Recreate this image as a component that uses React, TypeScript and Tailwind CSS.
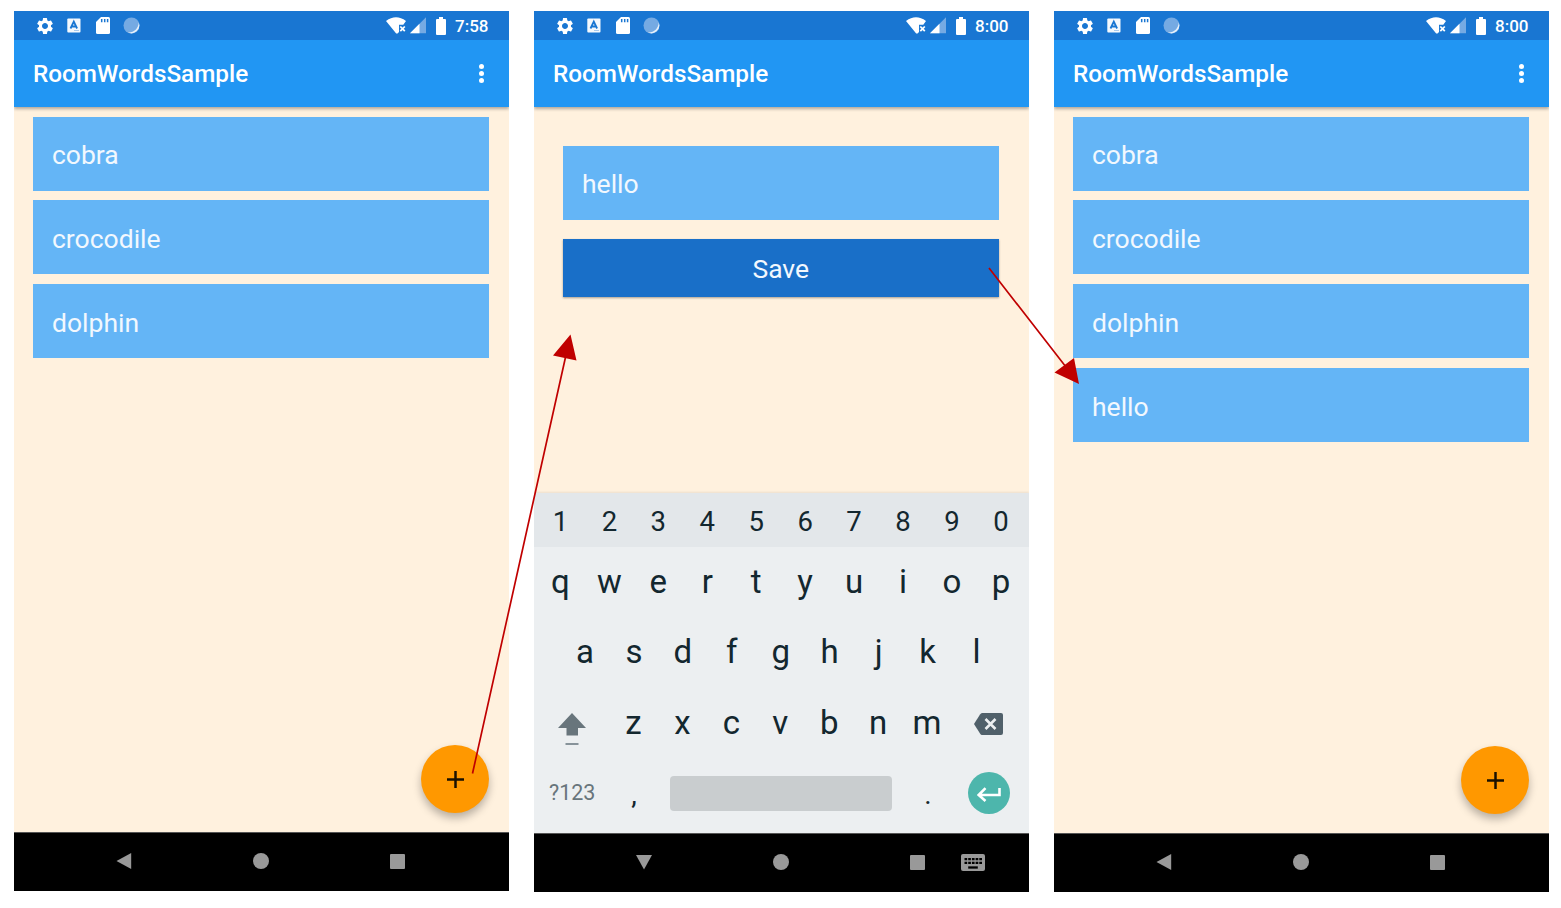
import type { ReactNode } from 'react';
import { MdSettings } from 'react-icons/md';

function StatusBar({ time }: { time: string }) {
  return (
    <div className="flex h-[29px] shrink-0 items-center bg-[#1976d2] pl-[21px] pr-[21px] text-white">
      <MdSettings className="h-5 w-5" />
      <svg className="ml-3 h-[15px] w-[14px]" viewBox="0 0 14 15">
        <rect x="0.3" y="0.5" width="13.2" height="14" rx="1" fill="#f4f8fd" />
        <path d="M3.500 10.500 6.800 3.500l3.300 7M4.600 8.500h4.400" fill="none" stroke="#1976d2" strokeWidth="1.800" />
        <path d="M7 12.500h5" stroke="#a9c9ec" />
      </svg>
      <svg className="ml-[15px] h-[17px] w-[14px]" viewBox="0 0 14 17">
        <path d="M5 0h7.500Q14 0 14 1.500v14Q14 17 12.500 17h-11Q0 17 0 15.500V5z" fill="#fff" />
        <path d="M5.700 2v3.200M8.700 2v3.200M11.600 2v3.200" stroke="#1976d2" strokeWidth="1.500" />
      </svg>
      <svg className="ml-[13px] h-[17px] w-[17px]" viewBox="0 0 17 17">
        <circle cx="8.500" cy="8.500" r="8" fill="#75aae3" />
        <path d="M15.800 5.500a8 8 0 0 1-11.300 9.800c6 .7 10.800-3.300 11.300-9.800z" fill="#e8f1fb" />
      </svg>
      <div className="flex-1" />
      <svg className="h-[17px] w-5" viewBox="0 0 20 17">
        <path d="M0 4Q10-3.500 20 4l-2.700 3.800h-4.300V15l-1.500 1.500h-1.300z" fill="#fff" />
        <path d="m14.300 9.500 4.500 4.700m0-4.700-4.500 4.700" stroke="#fff" strokeWidth="1.800" />
      </svg>
      <svg className="ml-1 h-[17px] w-4" viewBox="0 0 16 17">
        <path d="M16 .3v16H0z" fill="#75aae3" />
        <path d="M9.500 6.700v9.600H0z" fill="#fff" />
      </svg>
      <svg className="ml-[10px] h-[18px] w-[10px]" viewBox="0 0 10 18">
        <path d="M3 0h4v2h2q1 0 1 1v14q0 1-1 1H1q-1 0-1-1V3q0-1 1-1h2z" fill="#fff" />
      </svg>
      <span className="ml-[9px] w-[33px] pt-[2px] whitespace-nowrap text-[17px] leading-none font-medium">{time}</span>
    </div>
  );
}

function AppBar({ menu }: { menu?: boolean }) {
  return (
    <div className="flex h-[67px] shrink-0 items-center justify-between bg-[#2196f3] pr-[25px] pl-[19px] text-white shadow-[0_2px_3px_rgba(0,0,0,0.3)] [clip-path:inset(0_0_-8px_0)]">
      <h1 className="pt-px text-[24.300px] leading-7 font-medium">RoomWordsSample</h1>
      {menu && (
        <div className="flex flex-col gap-[2px]">
          <i className="h-[5px] w-[5px] rounded-full bg-white" />
          <i className="h-[5px] w-[5px] rounded-full bg-white" />
          <i className="h-[5px] w-[5px] rounded-full bg-white" />
        </div>
      )}
    </div>
  );
}

function NavBar({ editing }: { editing?: boolean }) {
  return (
    <div className="flex h-[59px] shrink-0 items-center border-t border-[#555] bg-black pb-[2px] pl-[102px] text-[#999]">
      <svg className="h-4 w-4" viewBox="0 0 16 16" fill="currentColor">
        {editing ? <path d="M0 1h16L8 15.500z" /> : <path d="M15.200 0v16L.5 8z" />}
      </svg>
      <i className="ml-[120.500px] h-4 w-4 rounded-full bg-[#999]" />
      <i className="ml-[121.500px] h-[15px] w-[15px] rounded-[1px] bg-[#999]" />
      {editing && (
        <svg className="ml-9 h-[17px] w-6" viewBox="0 0 24 17">
          <rect width="24" height="17" rx="2" fill="currentColor" />
          <path
            d="M3.500 5.200h17.500M3.500 8.800h17.500"
            stroke="#000"
            strokeWidth="2.300"
            strokeDasharray="2.700 1"
          />
          <path d="M7.200 13.500h9.600" stroke="#000" strokeWidth="2.300" />
        </svg>
      )}
    </div>
  );
}

function Phone({ time, menu, editing, className, children }: {
  time: string;
  menu?: boolean;
  editing?: boolean;
  className: string;
  children: ReactNode;
}) {
  return (
    <section className={`flex w-[495px] flex-col bg-[#fff1de] ${className}`}>
      <StatusBar time={time} />
      <AppBar menu={menu} />
      <main className="relative flex flex-1 flex-col">{children}</main>
      <NavBar editing={editing} />
    </section>
  );
}

function WordList({ words }: { words: string[] }) {
  return (
    <>
      <ul className="flex flex-col gap-[9.900px] pt-[9.600px] pr-5 pl-[19px]">
        {words.map((word) => (
          <li key={word} className="flex h-[74px] items-center bg-[#64b5f6] pt-[3px] pl-[19px] text-[26.500px] text-[#f2f8fe]">
            {word}
          </li>
        ))}
      </ul>
      <button className="absolute right-5 bottom-[19px] flex h-[68px] w-[68px] items-center justify-center rounded-full bg-[#ff9800] shadow-[0_5px_9px_rgba(0,0,0,0.28)]">
        <svg className="h-[17px] w-[17px]" viewBox="0 0 17 17">
          <path d="M8.500 0v17M0 8.500h17" stroke="#1a1000" strokeWidth="2.500" />
        </svg>
      </button>
    </>
  );
}

function Keys({ keys, className }: { keys: string; className: string }) {
  return (
    <div className={`flex ${className}`}>
      {keys.split('').map((key) => (
        <span key={key} className="w-[48.950px] text-center">
          {key}
        </span>
      ))}
    </div>
  );
}

function Keyboard() {
  return (
    <div className="flex h-[340px] shrink-0 flex-col bg-[#eceff1] text-[33px] leading-[40px] text-[#13272f] shadow-[0_-1px_2px_rgba(0,0,0,0.08)] [clip-path:inset(-6px_0_0_0)]">
      <Keys keys="1234567890" className="h-[54px] shrink-0 bg-[#e3e7ea] pt-[9px] pl-[2px] text-[27.500px]" />
      <Keys keys="qwertyuiop" className="h-[70px] shrink-0 pt-[15px] pl-[2px]" />
      <Keys keys="asdfghjkl" className="h-[71px] shrink-0 pt-[15px] pl-[26.500px]" />
      <div className="flex h-[71px] shrink-0 pt-[15px]">
        <svg className="mt-[10px] ml-[24px] h-[33px] w-7" viewBox="0 0 28 33">
          <path d="M14 0 28 15h-8v7.500H8.500V15H0z" fill="#68757c" />
          <path d="M7.500 31h13" stroke="#87939a" strokeWidth="2" />
        </svg>
        <Keys keys="zxcvbnm" className="ml-[23px]" />
        <svg className="mt-[10px] ml-[22.500px] h-[22px] w-[29px]" viewBox="0 0 29 22">
          <path d="M8 0h19q2 0 2 2v18q0 2-2 2H8q-1 0-2-1.500L0 11l6-9.500Q7 0 8 0z" fill="#50606a" />
          <path d="m11.500 6 10 10m0-10-10 10" stroke="#eceff1" strokeWidth="2.600" />
        </svg>
      </div>
      <div className="flex flex-1">
        <span className="mt-[14px] ml-[15px] w-[47px] whitespace-nowrap text-[21.500px] text-[#68757c]">?123</span>
        <span className="mt-[16px] ml-[26px] w-6 text-center text-[28px]">,</span>
        <i className="mt-[17px] ml-[24px] h-[35px] w-[222px] rounded-[4px] bg-[#c9cdcf]" />
        <span className="mt-[16px] ml-[24px] w-6 text-center text-[28px]">.</span>
        <i className="mt-[13px] ml-[27.500px] flex h-[42px] w-[42px] items-center justify-center rounded-full bg-[#4db6ac]">
          <svg className="mt-[2px] h-[15px] w-6" viewBox="0 0 24 15">
            <path d="M22.500 1v7H2M8.500 1.200 1.700 8l6.800 6" fill="none" stroke="#fff" strokeWidth="2.600" />
          </svg>
        </i>
      </div>
    </div>
  );
}

export default function App() {
  return (
    <div className="relative flex h-[908px] w-[1561px] items-start gap-[25px] overflow-hidden bg-white pt-[11px] pl-[14px] font-['Roboto',sans-serif]">
      <Phone time="7:58" menu className="h-[880px]">
        <WordList words={['cobra', 'crocodile', 'dolphin']} />
      </Phone>
      <Phone time="8:00" editing className="h-[881px]">
        <div className="flex flex-1 flex-col gap-[19px] pt-[39px] pr-[30px] pl-[28.500px] text-[26.500px] text-[#f2f8fe]">
          <div className="flex h-[74px] shrink-0 items-center bg-[#64b5f6] pt-px pl-[19.500px]">hello</div>
          <button className="flex h-[58px] shrink-0 items-center justify-center bg-[#196fc8] pt-px shadow-[0_1px_2px_rgba(0,0,0,0.35)]">
            Save
          </button>
        </div>
        <Keyboard />
      </Phone>
      <Phone time="8:00" menu className="h-[881px]">
        <WordList words={['cobra', 'crocodile', 'dolphin', 'hello']} />
      </Phone>
      <svg className="pointer-events-none absolute top-0 left-0 h-[908px] w-[1561px]" viewBox="0 0 1561 908" fill="#c00000">
        <path d="M472.500 773.500 566 355M989 268l77 99" stroke="#c00000" strokeWidth="1.700" />
        <path d="m570.500 334.500 6 26-23.500-5zM1079 384l-5-26-19.500 14.500z" />
      </svg>
    </div>
  );
}
